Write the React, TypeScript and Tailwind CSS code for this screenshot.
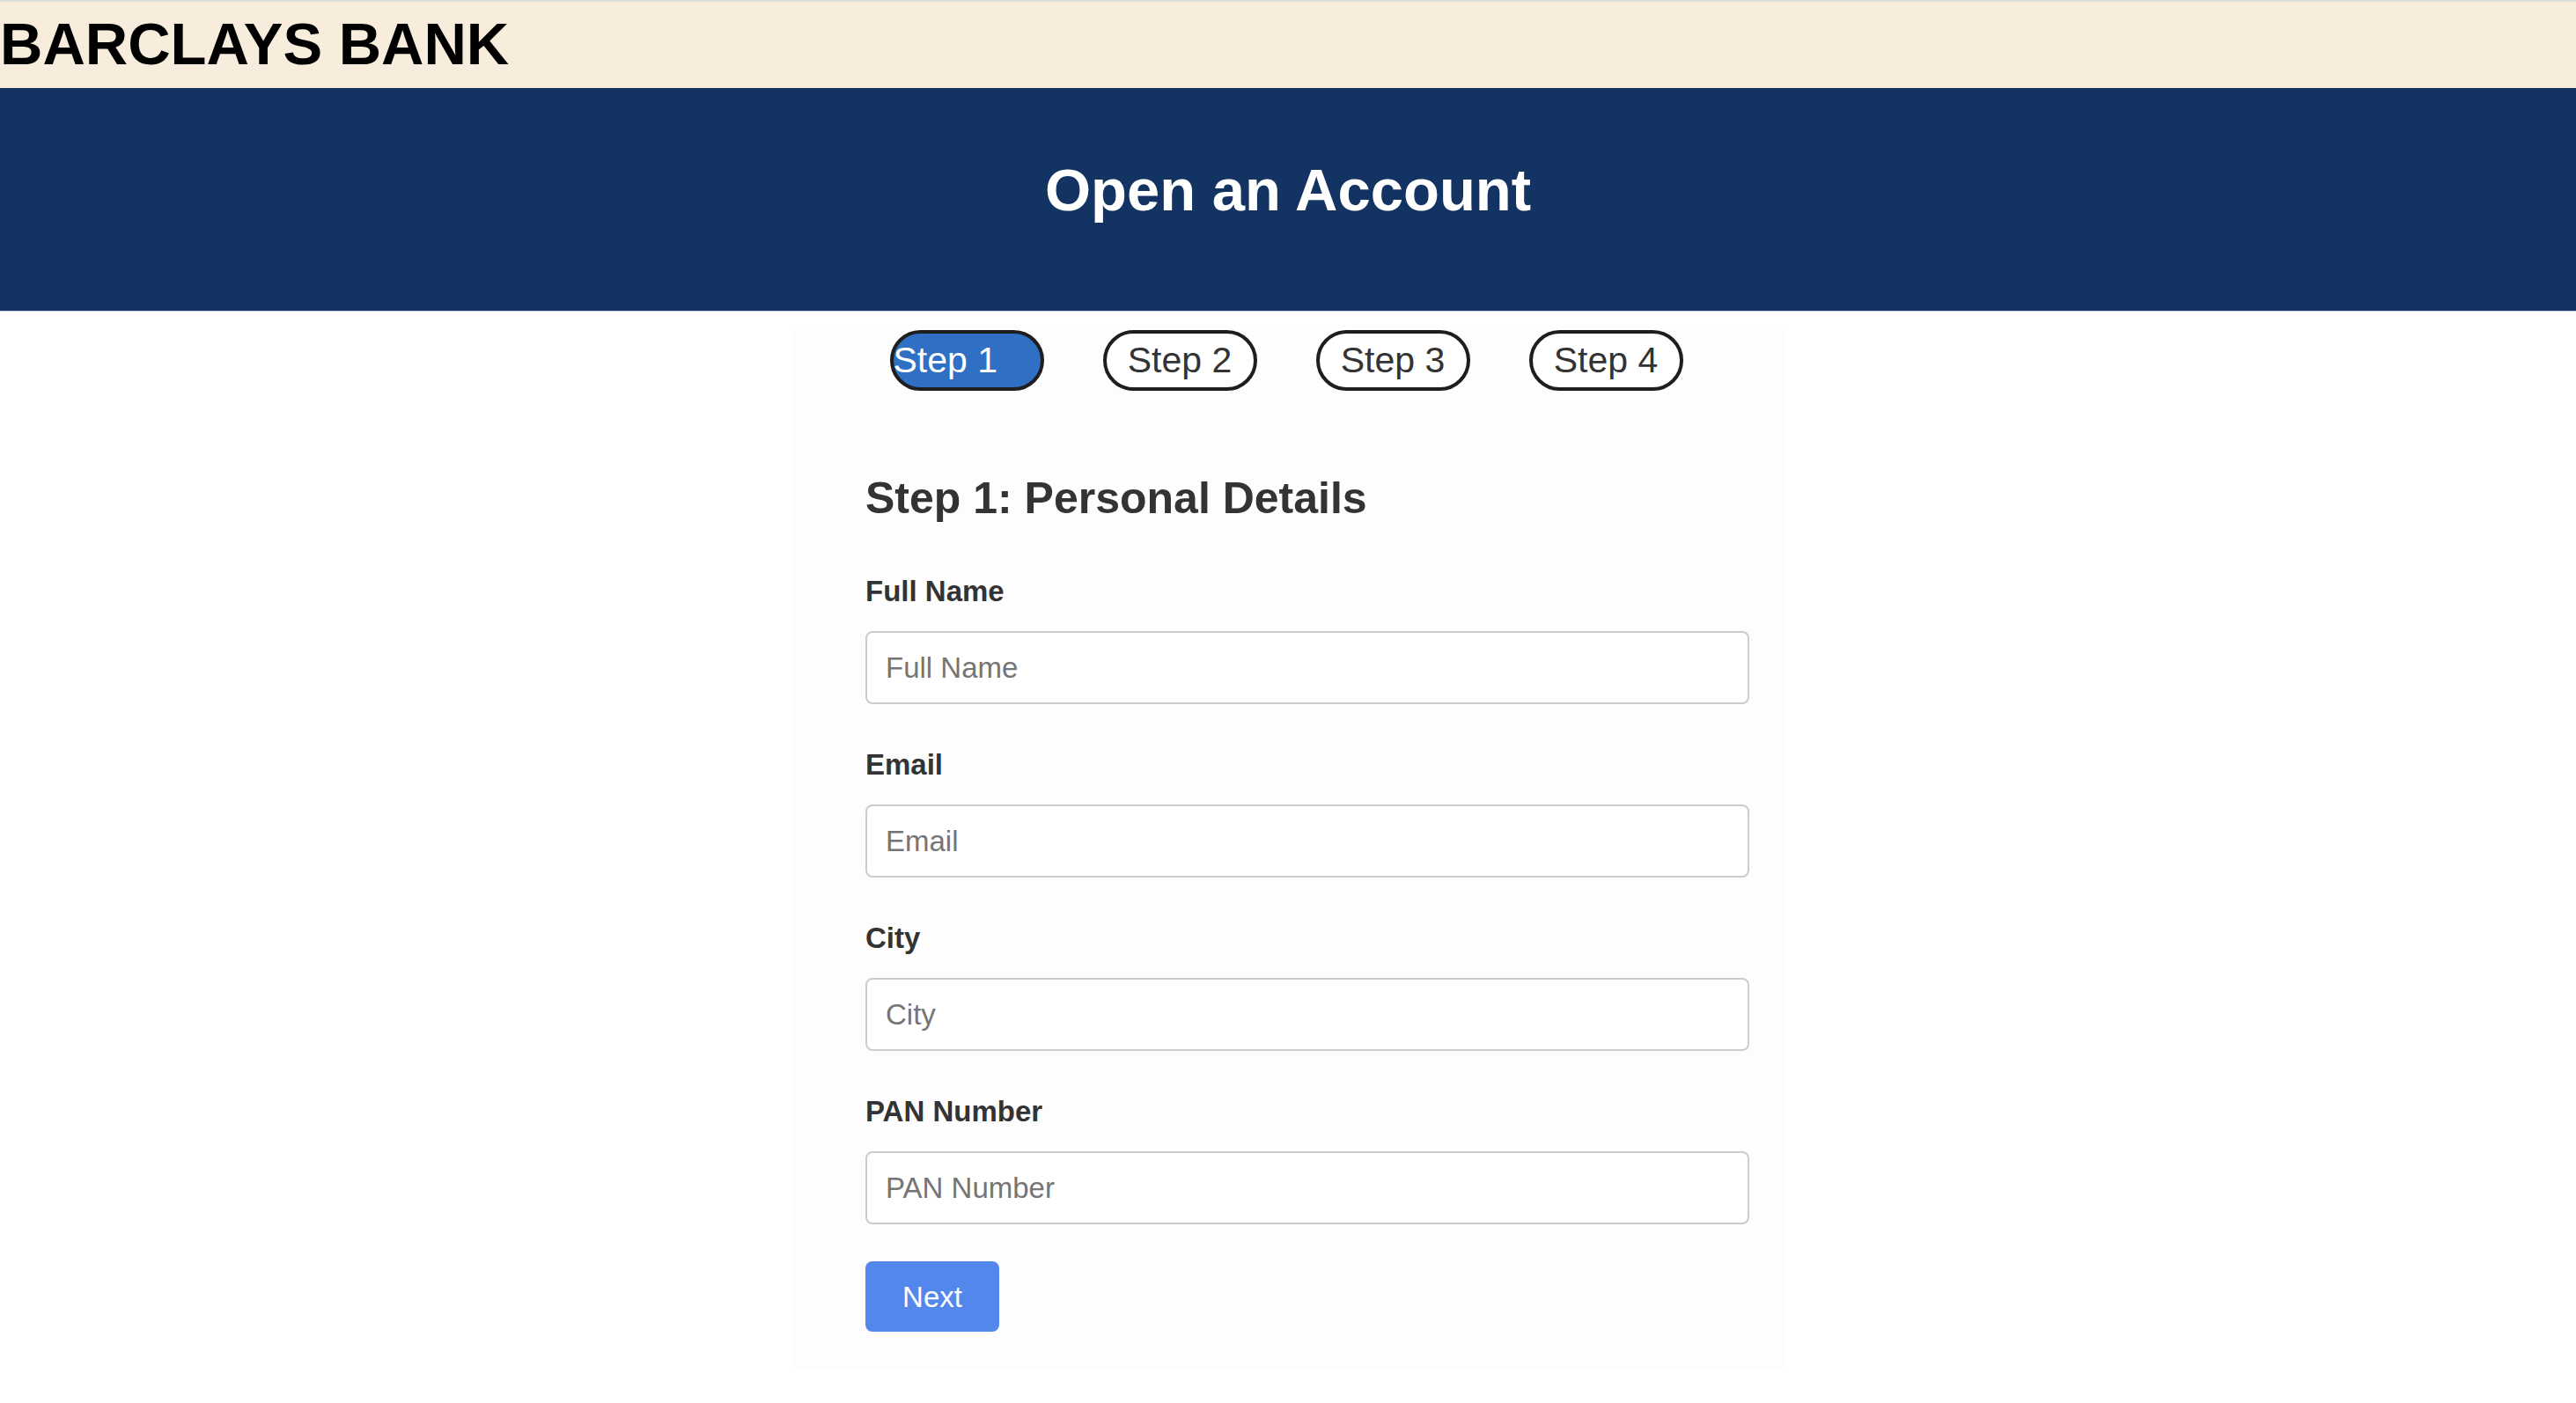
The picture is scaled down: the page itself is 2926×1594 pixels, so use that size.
import React from "react";

const fields = ["Full Name", "Email", "City", "PAN Number"];
const steps = ["Step 1", "Step 2", "Step 3", "Step 4"];

export default function App() {
  return (
    <div className="min-h-screen bg-white font-['Liberation_Sans',Arial,sans-serif]">
      <header className="h-[100px] bg-[#f8ecdc] border-t-2 border-[#dcdcdc] flex items-center pb-[3px]">
        <h1 className="text-[67px] font-bold leading-none text-black">BARCLAYS BANK</h1>
      </header>
      <section className="h-[254px] bg-[#133462] flex justify-center pt-[82px] border-b border-[#c8d0dc]">
        <h2 className="text-[67px] font-bold leading-none text-white">Open an Account</h2>
      </section>
      <main className="mt-[21px] mx-auto w-[1128px] bg-[#fdfdfd] px-[84px] pb-[42px]">
        <div className="flex justify-center gap-[67px] -ml-[4px]">
          {steps.map((s, i) => (
            <div
              key={s}
              className={
                i === 0
                  ? "h-[69px] w-[175px] rounded-full border-4 border-[#1e1e1e] bg-[#3070c4] text-white text-[41px] leading-none flex items-center justify-start"
                  : "h-[69px] w-[175px] rounded-full border-4 border-[#1e1e1e] bg-white text-[#333] text-[41px] leading-none flex items-center justify-center"
              }
            >
              {s}
            </div>
          ))}
        </div>
        <h3 className="mt-[93px] text-[50px] leading-[58px] font-bold text-[#333]">Step 1: Personal Details</h3>
        <div className="mt-[58px] flex flex-col">
          {fields.map((f, i) => (
            <div key={f} className={i === 0 ? "flex flex-col" : "flex flex-col mt-[50px]"}>
              <label className="text-[33px] leading-[37px] font-bold text-[#333]">{f}</label>
              <input
                placeholder={f}
                className="mt-[27px] h-[83px] w-[1004px] rounded-[8px] border-2 border-[#cccccc] bg-white pl-[21px] text-[33px] text-[#333] placeholder:text-[#757575] outline-none"
              />
            </div>
          ))}
        </div>
        <button className="mt-[42px] h-[80px] w-[152px] rounded-[8px] bg-[#5487eb] text-white text-[33px] leading-none flex items-center justify-center">
          Next
        </button>
      </main>
    </div>
  );
}
